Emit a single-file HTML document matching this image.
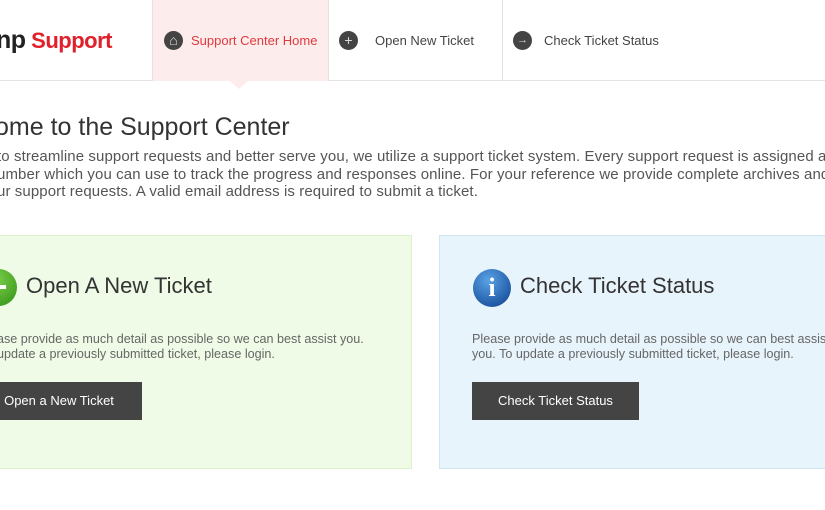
<!DOCTYPE html>
<html><head><style>
*{margin:0;padding:0;box-sizing:border-box}
body{width:825px;height:510px;overflow:hidden;background:#fff;font-family:"Liberation Sans",sans-serif;position:relative;color:#444}
.hdr{position:absolute;left:0;top:0;width:825px;height:81px;border-bottom:1px solid #e3e3e3}
.logo{position:absolute;left:-4px;top:26px;font-size:22px;font-weight:bold;color:#e0202a;letter-spacing:-0.5px}
.logo b{color:#222;font-size:25px}
.nav{position:absolute;top:0;height:81px;border-left:1px solid #e3e3e3;font-size:13px;color:#444}
.nav .ic{position:absolute;top:31px;width:19px;height:19px;border-radius:50%;background:#444;color:#ddd;font-size:14px;line-height:19px;text-align:center}
.nav span.t{position:absolute;top:33px;white-space:nowrap}
.arrow{position:absolute;left:230px;top:81px;width:0;height:0;border-left:9px solid transparent;border-right:9px solid transparent;border-top:8px solid #fdecec}
h1{position:absolute;left:-5px;top:113px;font-size:25px;font-weight:normal;color:#333}
.intro{position:absolute;left:-3px;top:148px;font-size:15px;line-height:17.5px;color:#555;white-space:nowrap;letter-spacing:0.1px}
.box{position:absolute;top:235px;height:234px;border:1px solid}
.p{position:absolute;font-size:12.6px;line-height:15px;color:#666;white-space:nowrap}
.btn{position:absolute;top:382px;height:38px;background:#444;color:#fff;font-size:13px;line-height:38px;text-align:center}
</style></head><body>
<div class="hdr">
<div class="logo"><b>np</b> Support</div>
<div class="nav" style="left:152px;width:176px;background:#fdecec"><div class="ic" style="left:11px">⌂</div><span class="t" style="left:38px;color:#e0393e">Support Center Home</span></div>
<div class="nav" style="left:328px;width:175px"><div class="ic" style="left:10px">+</div><span class="t" style="left:46px">Open New Ticket</span></div>
<div class="nav" style="left:502px;width:323px"><div class="ic" style="left:10px;font-size:11px">→</div><span class="t" style="left:41px">Check Ticket Status</span></div>
</div>
<div class="arrow"></div>
<h1>ome to the Support Center</h1>
<div class="intro">to streamline support requests and better serve you, we utilize a support ticket system. Every support request is assigned a<br>umber which you can use to track the progress and responses online. For your reference we provide complete archives and h<br>ur support requests. A valid email address is required to submit a ticket.</div>
<div class="box" style="left:-2px;width:414px;background:#effbe6;border-color:#ddf0cc"></div>
<div class="box" style="left:439px;width:400px;background:#e8f4fc;border-color:#d2e6f2"></div>
<div style="position:absolute;left:-20px;top:269px;width:37px;height:37px;border-radius:50%;background:radial-gradient(circle at 40% 30%,#7fd14a,#2f8f14)"><div style="position:absolute;left:18px;top:16px;width:8px;height:4px;background:#fff"></div></div>
<h2 style="position:absolute;left:26px;top:273px;font-size:22px;font-weight:normal;color:#333">Open A New Ticket</h2>
<div style="position:absolute;left:473px;top:269px;width:38px;height:38px;border-radius:50%;background:radial-gradient(circle at 40% 30%,#5aa2e6,#0a3f8c);color:#fff;font:bold 26px 'Liberation Serif',serif;text-align:center;line-height:38px">i</div>
<h2 style="position:absolute;left:520px;top:273px;font-size:22px;font-weight:normal;color:#333">Check Ticket Status</h2>
<div class="p" style="left:-3px;top:332px">ase provide as much detail as possible so we can best assist you.<br>update a previously submitted ticket, please login.</div>
<div class="p" style="left:472px;top:332px">Please provide as much detail as possible so we can best assis<br>you. To update a previously submitted ticket, please login.</div>
<div class="btn" style="left:-24px;width:166px">Open a New Ticket</div>
<div class="btn" style="left:472px;width:167px">Check Ticket Status</div>
</body></html>
